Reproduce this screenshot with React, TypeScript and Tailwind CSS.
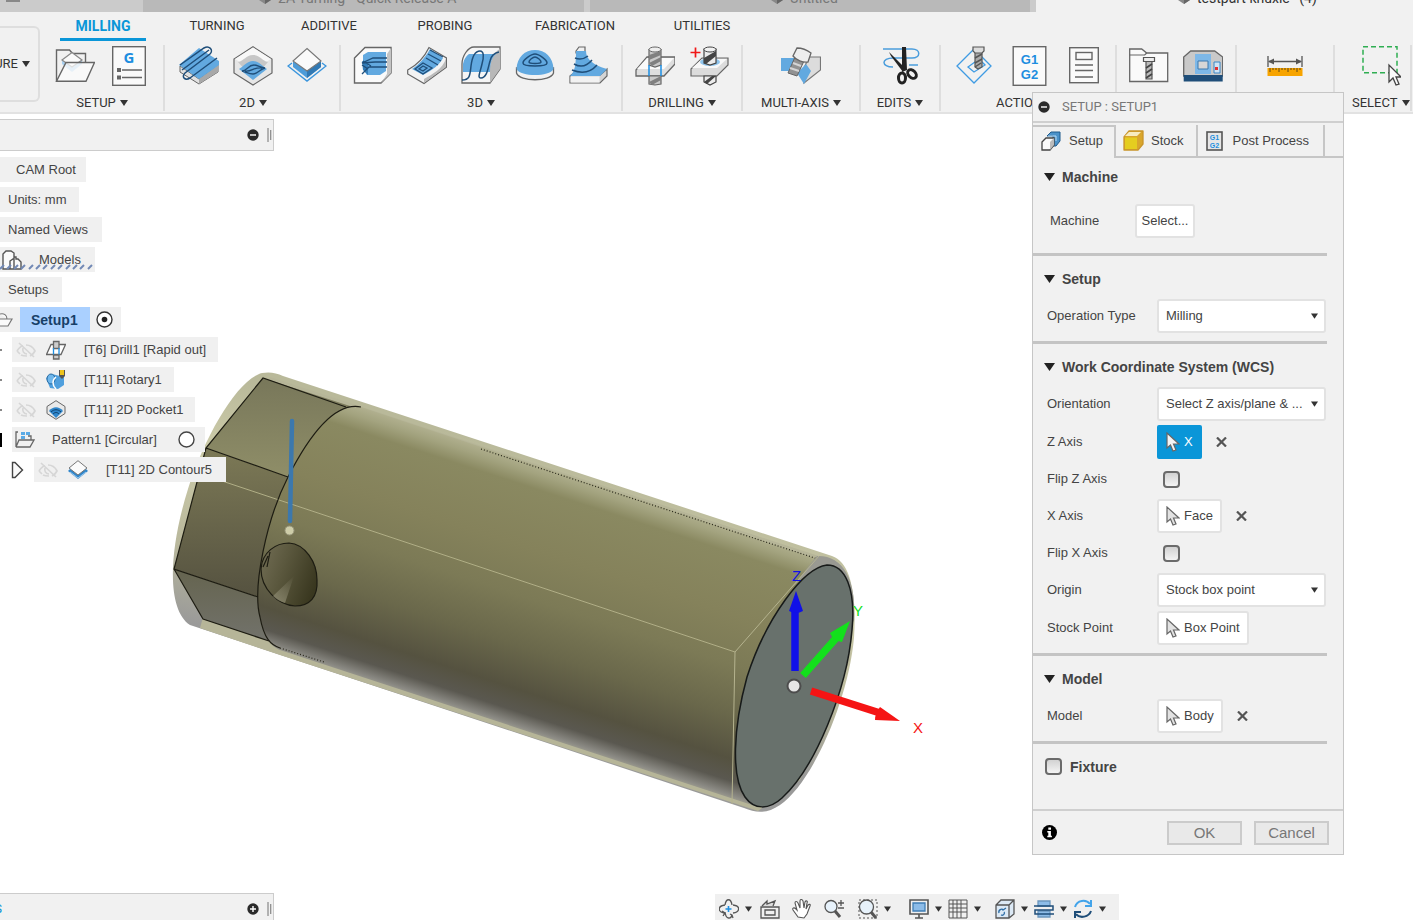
import React from "react";

const INK = "#666666";
const BLUE = "#62a9e0";
const NAVY = "#1f4e79";

function Icon({ children }: { children: React.ReactNode }) {
  return (
    <svg width="40" height="40" viewBox="0 0 40 40" fill="none" className="shrink-0" aria-hidden="true">
      {children}
    </svg>
  );
}

function Caret({ small = false }: { small?: boolean }) {
  return (
    <svg width={small ? 7 : 8} height="6" viewBox="0 0 8 6" className="shrink-0" aria-hidden="true">
      <path d="M0 0h8L4 6z" fill="#333" />
    </svg>
  );
}

const FolderSetup = () => (
  <Icon>
    <path d="M1.500 35V4h13l3 3.500h13v9" stroke={INK} strokeWidth="1.400" />
    <path d="M7 14l10 7 10-7v4l-10 8-10-8z" fill="#a9d0ef" />
    <path d="M17 6.500l10 7.500-10 7-10-7z" fill="#fafafa" stroke="#888" strokeWidth="1.200" />
    <path d="M11 16.500h28.500L31 35.300H1.500z" fill="#fbfbfb" fillOpacity="0.75" stroke={INK} strokeWidth="1.400" />
  </Icon>
);

const GSheet = () => (
  <Icon>
    <rect x="3.700" y="0.700" width="32.600" height="38.600" fill="#fafafa" stroke={INK} strokeWidth="1.400" />
    <text x="20" y="17" textAnchor="middle" fontSize="15" fontWeight="700" fontFamily="Noto Sans, sans-serif" fill="#1e8ee0">G</text>
    <path d="M8 22h4v4H8zM8 29.500h4v4H8z" fill={INK} />
    <path d="M13 24h20M13 31.500h20" stroke={INK} strokeWidth="1.400" />
  </Icon>
);

const Face2D = () => (
  <Icon>
    <path d="M1 20l19 13 19-14v7L20 38 1 26z" fill="#e2e2e2" stroke={INK} strokeWidth="1" />
    <path d="M20 33l19-14v7L20 38z" fill="#a8a8a8" />
    <path d="M0 19L20 2l20 13v4L20 33z" fill={BLUE} />
    <path d="M1 19L25 2c5-3 10 2 6 6L6 27c-4 4 0 8 5 5l27-20M3 24L30 4" stroke={NAVY} strokeWidth="1.500" />
  </Icon>
);

const Pocket2D = () => (
  <Icon>
    <path d="M20 0.700L39 13v14L20 39 1 27V13z" fill="#e6e6e6" stroke={INK} strokeWidth="1.200" />
    <path d="M20 1.500L38 13 20 24 2 13z" fill="#f8f8f8" />
    <path d="M5 16c6-1 8-7 15-7s9 6 15 7l-15 17z" fill="#c7c7c7" />
    <path d="M6 23c4-2 8-8 14-8s10 6 14 8L20 34z" fill={BLUE} />
    <path d="M9 25c5 0 6-6 12-6 3 0 6 2 11 3-5 1-7 6-12 6-4 0-7-2-11-3zM12 25c7 1 8-4 17-3" stroke={NAVY} strokeWidth="1.300" />
  </Icon>
);

const Contour2D = () => (
  <Icon>
    <path d="M5 17L1 20l19 15 19-15-4-3" stroke="#3a95dd" strokeWidth="1.400" />
    <path d="M6 15l14 10 14-10v6L20 32 6 21z" fill="#4d9cd9" />
    <path d="M20 25l14-10v6L20 32z" fill="#3179b4" />
    <path d="M20 2.500L34 15 20 25 6 15z" fill="#fafafa" stroke="#777" strokeWidth="1.100" />
  </Icon>
);

const Clearing3D = () => (
  <Icon>
    <path d="M1.500 37V12L12 1.500h26V27L28 37z" fill="#fafafa" stroke={INK} strokeWidth="1.400" />
    <path d="M28 37l10-10V2l-4 6v20z" fill="#c4c4c4" />
    <path d="M10 9l5-3h18v19l-6 4H14l-4-6z" fill={BLUE} />
    <path d="M9 15l6 3v11l-5-5z" fill="#347db8" />
    <path d="M34 12H20L9 17l13-1h12M34 21H16l-7 7M10 15l8 5M9 19l6 4" stroke={NAVY} strokeWidth="1.300" />
  </Icon>
);

const Parallel3D = () => (
  <Icon>
    <path d="M0.700 24C12 18 18 10 22 1.500L39.500 12v9L17 37.500 0.700 28z" fill="#f3f3f3" stroke={INK} strokeWidth="1.200" />
    <path d="M17 33c9-5 18-10 22-20v8L17 37z" fill="#bbb" />
    <path d="M5 23C13 18 19 10 23 3l13 9c-3 6-10 12-20 17z" fill={BLUE} />
    <path d="M8 23l8-6 9 5-9 6zM12 23l4-3 4 2-4 3zM19 12l12 7M21 8l13 7M23 4l13 7" stroke={NAVY} strokeWidth="1.300" />
  </Icon>
);

const Scallop3D = () => (
  <Icon>
    <path d="M1 18C1 10 7 1 13 1h26v22L29 37H1z" fill="#f5f5f5" stroke={INK} strokeWidth="1.300" />
    <path d="M29 37V20c1-8 5-15 10-17v20z" fill="#b8b8b8" />
    <path d="M2 26v-8C3 13 5 10 8 8h27c-4 3-6 8-6 18z" fill={BLUE} />
    <path d="M1 34c8 0 8-5 9-14 1-8 4-15 9-15 4 0 4 6 2 13-2 9-5 14-1 14 6 0 7-10 9-17 1-5 4-8 9-9" stroke={NAVY} strokeWidth="1.500" />
  </Icon>
);

const Dome3D = () => (
  <Icon>
    <path d="M1.500 22v5c3 9 34 9 37 0v-5z" fill="#f2f2f2" stroke={INK} strokeWidth="1.300" />
    <path d="M1.500 23C2 11 10 4 20 4s18 7 18.500 19c-4 8-33 8-37 0z" fill={BLUE} />
    <path d="M8 17c0-3 8-9 12-9s12 6 12 9c0 4-24 4-24 0zM14 16c0-2 4-5 6-5s6 3 6 5-12 2-12 0z" stroke={NAVY} strokeWidth="1.500" />
  </Icon>
);

const Tower3D = () => (
  <Icon>
    <path d="M1 30l8-6 22 5 7-6v7l-7 7H1z" fill="#d4d4d4" stroke={INK} strokeWidth="1.200" />
    <path d="M7 5l3-4h6v6H7z" fill="#f0f0f0" stroke={INK} strokeWidth="1.200" />
    <path d="M1 30C6 26 7 18 7 5h10c0 8 7 14 21 18l-7 7z" fill={BLUE} />
    <path d="M6 12c5 2 9 1 13-2M5 18c7 4 13 2 18-4M3 24c10 4 19 2 25-5" stroke={NAVY} strokeWidth="1.500" />
    <path d="M1.500 30.500h29v6h-29z" fill="#f2f2f2" />
  </Icon>
);

const Drill = () => (
  <Icon>
    <path d="M1 24L12 11h28v7L29 30H1z" fill="#dedede" stroke={INK} strokeWidth="1.300" />
    <path d="M2 23h27l10-11H12z" fill="#fafafa" />
    <path d="M14 3.500h12V19l-6 2-6-2zM14 30h12v8l-6 1-6-1z" fill="#c9c9c9" stroke={INK} strokeWidth="1.200" />
    <path d="M14 9l12-4v4l-12 5zM14 17l12-6v4l-9 5zM14 36l12-6v4l-9 5z" fill="#808080" />
    <ellipse cx="20" cy="3.500" rx="6" ry="2.500" fill="#eee" stroke={INK} />
    <path d="M14 19v11M26 19v11" stroke="#1d8fe3" strokeWidth="1.500" />
  </Icon>
);

const DrillPlus = () => (
  <Icon>
    <path d="M2 23l11-11h26v7L28 30H2z" fill="#dcdcdc" stroke={INK} strokeWidth="1.200" />
    <path d="M3 22h25l10-9H13z" fill="#f8f8f8" />
    <ellipse cx="21" cy="16" rx="10" ry="4" fill="#8fc4ec" />
    <path d="M15 3h12v14l-6 2-6-2zM15 30h12v6l-6 3-6-3z" fill="#ececec" stroke="#444" strokeWidth="1.200" />
    <path d="M15 12l12-7v5l-10 8-2-1zM15 36l8-6h4l-9 8z" fill="#444" />
    <ellipse cx="21" cy="3.500" rx="6" ry="2.500" fill="#f2f2f2" stroke="#444" />
    <path d="M6.500 1.500v10M1.500 6.500h10" stroke="#f01818" strokeWidth="1.700" />
  </Icon>
);

const MultiAxis = () => (
  <Icon>
    <path d="M0 12h18v13H0z" fill={BLUE} />
    <path d="M28 11h11.500v13L23 37V22z" fill="#dcdcdc" stroke="#777" strokeWidth="1.200" />
    <path d="M16 27l9-9 5 7-7 13z" fill={BLUE} />
    <path d="M14 11l9 4-7 15-9-3z" fill="#929292" stroke={INK} />
    <path d="M12 17l8 3M9 22l9 3" stroke="#d5d5d5" strokeWidth="2" />
    <path d="M16 2c6 0 10 2 14 5l-3 9c-5 1-12-2-15-6z" fill="#eee" stroke={INK} strokeWidth="1.300" />
  </Icon>
);

const Scissors = () => (
  <Icon>
    <path d="M3 3h29c9 0 9 9 0 9H13c-12 0-12 9 0 9M29 19h9" stroke="#4b9ddc" strokeWidth="1.500" />
    <path d="M22 1h4l1 23-5 2zM9 6l17 17-3 3L11 10z" fill="#222" />
    <ellipse cx="22" cy="32" rx="3.500" ry="5" stroke="#222" strokeWidth="3" />
    <ellipse cx="32" cy="28" rx="3.500" ry="5" stroke="#222" strokeWidth="3" transform="rotate(-45 32 28)" />
  </Icon>
);

const Simulate = () => (
  <Icon>
    <path d="M19 3L2 20l17 17 17-17zM24 13l6 6-11 7-6-5z" stroke="#3f9be3" strokeWidth="1.300" />
    <path d="M20 6h7v15l-4 2-3-2z" fill="#aaa" stroke="#555" strokeWidth="1.200" />
    <path d="M20 12l7-4M20 17l7-4M20 21l6-4" stroke="#555" strokeWidth="1.500" />
    <path d="M18 1h11v4l-2 2h-7l-2-2z" fill="#ddd" stroke="#555" strokeWidth="1.200" />
  </Icon>
);

const G1G2 = () => (
  <Icon>
    <rect x="4.200" y="0.700" width="32.600" height="38.600" fill="#fafafa" stroke={INK} strokeWidth="1.400" />
    <g fontSize="13" fontWeight="700" fontFamily="Liberation Sans, sans-serif" fill="#1e8ee0">
      <text x="20.500" y="18" textAnchor="middle">G1</text>
      <text x="20.500" y="33" textAnchor="middle">G2</text>
    </g>
  </Icon>
);

const Sheet = () => (
  <Icon>
    <rect x="6.700" y="1.700" width="28.600" height="35" fill="#fafafa" stroke={INK} strokeWidth="1.400" />
    <rect x="13" y="6.500" width="16" height="7" stroke={INK} strokeWidth="1.400" />
    <path d="M12 19h18M12 24.500h18M12 31h18" stroke={INK} strokeWidth="1.500" />
  </Icon>
);

const ToolLibrary = () => (
  <Icon>
    <path d="M0.700 35.500V3h12l5 4h21v28.500z" fill="#fafafa" stroke={INK} strokeWidth="1.300" />
    <path d="M0.700 9h15l2-2" stroke={INK} strokeWidth="1.200" />
    <path d="M17 15h6v18h-6z" fill="#bbb" stroke="#555" strokeWidth="1.200" />
    <path d="M17 22l6-4M17 27l6-4M17 32l6-4" stroke="#444" strokeWidth="1.700" />
    <path d="M14.500 11.500h11v4h-11z" fill="#eee" stroke="#555" strokeWidth="1.200" />
  </Icon>
);

const MachineLibrary = () => (
  <Icon>
    <path d="M0.700 30V11l7-6h24l8 6v19z" fill="#c9c9c9" stroke="#666" strokeWidth="1.300" />
    <path d="M0.700 29h39v6.500H.7z" fill={NAVY} />
    <path d="M12 8h16v20H12z" fill="#7db8e8" />
    <path d="M15 15h10v8H15z" fill="#d6d6d6" stroke="#3b79ae" />
    <path d="M31 16h6v11h-6z" fill="#cfe4f5" stroke="#3a86c5" />
    <path d="M32 21h3v3h-3z" fill="#e13030" />
  </Icon>
);

const Ruler = () => (
  <Icon>
    <path d="M3 10v11M37 10v11M4 15.500h32" stroke="#555" strokeWidth="1.300" />
    <path d="M3 15.500l6-3v6zM37 15.500l-6-3v6z" fill="#555" />
    <rect x="2.500" y="22" width="35" height="8" fill="#f7a400" />
    <path d="M5 22v4M8 22v2M11 22v2M14 22v4M17 22v2M20 22v2M23 22v4M26 22v2M29 22v2M32 22v4M35 22v2" stroke="#5e4614" />
  </Icon>
);

const SelectIcon = () => (
  <Icon>
    <rect x="2" y="0.800" width="34" height="26" stroke="#2fae52" strokeWidth="1.500" strokeDasharray="5 3" />
    <path d="M28 19v17l4-4 3 7 3-1-3-7h5z" fill="#fafafa" stroke="#444" strokeWidth="1.300" />
  </Icon>
);

function Group({ label, icons, className = "" }: { label: string; icons: React.ReactNode[]; className?: string }) {
  return (
    <div className={`flex h-[66px] shrink-0 flex-col items-center justify-between border-r-2 border-[#dedede] pt-px ${className}`}>
      <div className="flex gap-3.5">
        {icons.map((icon, i) => (
          <button key={i} type="button" aria-label={`${label || "Tool"} ${i + 1}`} className="block">
            {icon}
          </button>
        ))}
      </div>
      {label && (
        <button type="button" className="flex items-center gap-1 text-[13px] leading-4">
          {label}
          <Caret />
        </button>
      )}
    </div>
  );
}

function DocIcon() {
  return (
    <svg width="14" height="14" viewBox="0 0 14 14" aria-hidden="true">
      <path d="M7 0l6 3v7l-6 4-6-4V3z" fill="#888" />
      <path d="M7 7v7l6-4V3z" fill="#666" />
    </svg>
  );
}

function DocumentTabs() {
  const title = "-mt-2.5 flex gap-1.5 whitespace-nowrap";
  return (
    <div className="flex h-3 overflow-hidden bg-[#cbcbcb] text-sm leading-4 text-[#777]">
      <div className="w-[143px] shrink-0 pl-1.5">
        <div className="h-0.5 w-3.5 bg-[#888]" />
      </div>
      <div className="mr-1.5 flex min-w-0 flex-1 justify-center bg-[#b9b9b9]">
        <div className={`${title} pr-3`}><DocIcon />2A Turning - Quick Release A</div>
      </div>
      <div className="mr-1.5 flex min-w-0 flex-1 justify-center bg-[#b9b9b9]">
        <div className={`${title} pr-3`}><DocIcon />Untitled</div>
      </div>
      <div className="flex w-[377px] shrink-0 bg-[#f1f1f1] pl-[141px] text-[#333]">
        <div className={title}><DocIcon />testpart knuxie* (4)</div>
      </div>
    </div>
  );
}

function Toolbar() {
  const tab = "shrink-0 text-center";
  return (
    <header className="flex h-[102px] overflow-hidden border-b-2 border-[#e2e2e2] bg-[#f1f1f1] text-[13px] text-[#333]">
      <button type="button" className="mt-3.5 flex h-[76px] w-10 shrink-0 items-center justify-end gap-1 overflow-hidden rounded-r-md border-2 border-l-0 border-[#dedede] pr-2">
        <span>MANUFACTURE</span>
        <Caret />
      </button>
      <div className="flex min-w-0 flex-1 flex-col">
        <nav className="flex pt-1.5 pl-5 leading-4">
          <button type="button" className="h-[23px] w-[86px] shrink-0 border-b-[3px] border-[#0a96d8] pb-1 text-sm leading-4 font-bold text-[#0a96d8]">MILLING</button>
          <button type="button" className={`${tab} ml-2.5 h-4 w-[122px]`}>TURNING</button>
          <button type="button" className={`${tab} h-4 w-[102px]`}>ADDITIVE</button>
          <button type="button" className={`${tab} h-4 w-[130px]`}>PROBING</button>
          <button type="button" className={`${tab} h-4 w-[130px]`}>FABRICATION</button>
          <button type="button" className={`${tab} h-4 w-[124px]`}>UTILITIES</button>
        </nav>
        <div className="mt-1 flex">
          <Group label="SETUP" className="pr-3.5 pl-[15px]" icons={[<FolderSetup />, <GSheet />]} />
          <Group label="2D" className="pr-3 pl-3.5" icons={[<Face2D />, <Pocket2D />, <Contour2D />]} />
          <Group label="3D" className="pr-3 pl-3" icons={[<Clearing3D />, <Parallel3D />, <Scallop3D />, <Dome3D />, <Tower3D />]} />
          <Group label="DRILLING" className="px-3" icons={[<Drill />, <DrillPlus />]} />
          <Group label="MULTI-AXIS" className="w-[118px]" icons={[<MultiAxis />]} />
          <Group label="EDITS" className="w-20" icons={[<Scissors />]} />
          <Group label="ACTIONS" className="pr-3 pl-3.5" icons={[<Simulate />, <G1G2 />, <Sheet />]} />
          <Group label="" className="pr-3 pl-3" icons={[<ToolLibrary />, <MachineLibrary />]} />
          <Group label="" className="w-[98px]" icons={[<Ruler />]} />
          <Group label="SELECT" className="pl-[17px]" icons={[<SelectIcon />]} />
        </div>
      </div>
    </header>
  );
}

function HiddenEye() {
  return (
    <svg width="20" height="16" viewBox="0 0 20 16" fill="none" stroke="#d6d6d6" strokeWidth="1.700" aria-hidden="true">
      <path d="M3 1l15 14M1 9c2-3 4-5 6-5M4 12c-1-1-2-2-3-3M10 3c4 0 7 2 9 6-1 2-3 4-5 5M5 13c2 1 4 1 6 1M7 6c-1 3 1 6 4 6" />
    </svg>
  );
}

function MiniDrill() {
  return (
    <svg width="20" height="20" viewBox="0 0 40 40" fill="none" stroke="#666" strokeWidth="2.600" aria-hidden="true">
      <path d="M1 29L10 9h29l-9 20z" fill="#fff" />
      <path d="M15 3h11v14H15zM15 30h11v8H15z" fill="#ccc" />
      <path d="M15 16v13M26 16v13" stroke="#1d8fe3" />
    </svg>
  );
}

function MiniRotary() {
  return (
    <svg width="20" height="20" viewBox="0 0 20 20" fill="none" aria-hidden="true">
      <path d="M0 8l6-4 12 3v8l-6 4-8-1z" fill="#4f9fdd" />
      <ellipse cx="5" cy="9" rx="4" ry="5" fill="#6fb7ec" stroke="#27699f" />
      <path d="M10 7c-4 3-4 8 0 12" stroke="#fff" strokeWidth="1.500" />
      <path d="M13 0h6v6l-3 3-3-3z" fill="#555" />
      <path d="M14 0h4v5h-4z" fill="#eec31b" />
    </svg>
  );
}

function MiniPocket() {
  return (
    <svg width="20" height="20" viewBox="0 0 20 20" fill="none" aria-hidden="true">
      <path d="M10 .7L19 6.500v7L10 19.300l-9-5.800v-7z" fill="#e9e9e9" stroke="#666" />
      <path d="M3 11c4-5 10-5 14 0l-7 7z" fill="#2f86cb" />
      <path d="M5 12c3-3 7-3 10 0M7 14c2-2 4-2 6 0" stroke="#103f69" />
    </svg>
  );
}

function MiniContour() {
  return (
    <svg width="20" height="20" viewBox="0 0 20 20" fill="none" aria-hidden="true">
      <path d="M0 11l10 8 10-8-2-2v-2H2v2z" fill="#2f86cb" />
      <path d="M2 12l8 6 8-6" stroke="#bcdcf5" strokeWidth=".8" />
      <path d="M10 .7L19 8l-9 7-9-7z" fill="#fbfbfb" stroke="#777" />
    </svg>
  );
}

function MiniPattern() {
  return (
    <svg width="20" height="18" viewBox="0 0 20 18" fill="none" stroke="#666" strokeWidth="1.300" aria-hidden="true">
      <path d="M3 1H1v15L4 9h15l-4 7H1M16 9V5h-3" />
      <path d="M6 1h4v3H6zM11 1h4v3h-4zM6 5h4v3H6z" fill="#5aaae5" stroke="none" />
    </svg>
  );
}

function Stepper({ minus = true }: { minus?: boolean }) {
  return (
    <svg width="12" height="12" viewBox="0 0 12 12" className="shrink-0" aria-hidden="true">
      <circle cx="6" cy="6" r="5.700" fill="#2a2a2a" />
      <path d={minus ? "M3 6h6" : "M3 6h6M6 3v6"} stroke="#fff" strokeWidth="1.400" />
    </svg>
  );
}

function Grip() {
  return (
    <svg width="5" height="14" viewBox="0 0 5 14" aria-hidden="true">
      <path d="M1 0v14M3.700 2v10" stroke="#888" strokeWidth="1.200" />
    </svg>
  );
}

function Op({ icon, label }: { icon: React.ReactNode; label: string }) {
  return (
    <li className="flex items-center">
      <span className="w-3 shrink-0"><span className="block size-0.5 bg-[#888]" /></span>
      <div className="flex h-[25px] items-center bg-[#f0f0f0] pr-3 pl-1">
        <HiddenEye />
        <span className="mr-[18px] ml-2.5">{icon}</span>
        {label}
      </div>
    </li>
  );
}

function Browser() {
  const chip = "flex h-[25px] items-center bg-[#f0f0f0]";
  return (
    <aside className="relative w-[274px] pt-[5px] font-['Liberation_Sans',sans-serif] text-[13px] whitespace-nowrap text-[#444]">
      <div className="flex h-8 items-center justify-end gap-2 border border-l-0 border-[#ccc] bg-[#f1f1f1] pr-px">
        <button type="button" aria-label="Collapse browser"><Stepper /></button>
        <Grip />
      </div>
      <ul className="flex flex-col items-start gap-[5px] pt-1.5">
        <li className={`${chip} pr-2.5 pl-4`}>CAM Root</li>
        <li className={`${chip} pr-3 pl-2`}>Units: mm</li>
        <li className={`${chip} pr-3.5 pl-2`}>Named Views</li>
        <li className={`${chip} relative pr-3.5 pl-0.5`}>
          <svg width="20" height="20" viewBox="0 0 20 20" fill="#fafafa" stroke="#555" strokeWidth="1.400" className="mr-[17px]" aria-hidden="true">
            <path d="M1 19V4l3-3h5l3 2v16zM8 19V11l3-2h1V7h2v2h2l3 3v7z" />
          </svg>
          Models
          <svg width="93" height="6" viewBox="0 0 93 6" className="absolute bottom-0.5 left-0" aria-hidden="true">
            <path d="M0 5l4-4M7 5l4-4M14 5l4-4M21 5l4-4M29 5l4-4M36 5l4-4M43 5l4-4M51 5l4-4M58 5l4-4M66 5l4-4M73 5l4-4M80 5l4-4M88 5l4-4" stroke="#7289b5" strokeWidth="2" />
          </svg>
        </li>
        <li className={`${chip} pr-3.5 pl-2`}>Setups</li>
        <li className={`${chip} pr-2`}>
          <svg width="13" height="16" viewBox="0 0 13 16" fill="#fafafa" stroke="#777" strokeWidth="1.200" className="mr-[7px]" aria-hidden="true">
            <path d="M0 2c4-1 7 1 7 5M0 7h12l-4 7H0" />
          </svg>
          <span className="mr-1.5 flex h-full items-center bg-[#aad0ff] pr-3 pl-[11px] text-sm font-bold text-[#173f68]">Setup1</span>
          <svg width="17" height="17" viewBox="0 0 17 17" aria-hidden="true">
            <circle cx="8.500" cy="8.500" r="7.500" fill="#fff" stroke="#333" strokeWidth="1.400" />
            <circle cx="8.500" cy="8.500" r="2.800" fill="#222" />
          </svg>
        </li>
        <Op icon={<MiniDrill />} label="[T6] Drill1 [Rapid out]" />
        <Op icon={<MiniRotary />} label="[T11] Rotary1" />
        <Op icon={<MiniPocket />} label="[T11] 2D Pocket1" />
        <li className="flex items-center">
          <span className="w-3"><span className="block h-3.5 w-0.5 bg-black" /></span>
          <div className={`${chip} pr-2.5 pl-[3px]`}>
            <MiniPattern />
            <span className="mr-[21px] ml-[17px]">Pattern1 [Circular]</span>
            <svg width="17" height="17" viewBox="0 0 17 17" aria-hidden="true">
              <circle cx="8.500" cy="8.500" r="7.500" fill="#fff" stroke="#444" strokeWidth="1.400" />
            </svg>
          </div>
        </li>
        <li className="flex items-center pl-[11px]">
          <svg width="13" height="18" viewBox="0 0 13 18" className="mr-2.5" aria-hidden="true">
            <path d="M1.500 1.500v15H4L11.500 9 4 1.500z" fill="#fafafa" stroke="#444" strokeWidth="1.400" />
          </svg>
          <div className={`${chip} pr-3.5 pl-1`}>
            <HiddenEye />
            <span className="mr-[18px] ml-2.5"><MiniContour /></span>
            [T11] 2D Contour5
          </div>
        </li>
      </ul>
    </aside>
  );
}

function Scene() {
  return (
    <svg
      width="800"
      height="470"
      viewBox="150 354 800 470"
      fill="none"
      className="absolute top-[240px] left-[150px]"
      role="img"
      aria-label="Cylindrical part with stock and work coordinate axes"
    >
      <defs>
        <linearGradient id="shaft" gradientUnits="userSpaceOnUse" x1="560" y1="469" x2="478" y2="721">
          <stop offset="0" stopColor="#b4b393" />
          <stop offset=".045" stopColor="#a3a37f" />
          <stop offset=".1" stopColor="#8a8961" />
          <stop offset=".32" stopColor="#85825b" />
          <stop offset=".5" stopColor="#7c7a56" />
          <stop offset=".68" stopColor="#6a684b" />
          <stop offset=".84" stopColor="#555240" />
          <stop offset=".92" stopColor="#5a5850" />
          <stop offset=".97" stopColor="#8b8a84" />
          <stop offset="1" stopColor="#b0af99" />
        </linearGradient>
        <linearGradient id="stock" gradientUnits="userSpaceOnUse" x1="240" y1="380" x2="180" y2="620">
          <stop offset="0" stopColor="#b9b99a" />
          <stop offset=".3" stopColor="#cccba9" />
          <stop offset=".7" stopColor="#b9b89c" />
          <stop offset="1" stopColor="#9a9a99" />
        </linearGradient>
        <linearGradient id="hexTop" x1="0" y1="0" x2="0" y2="1">
          <stop offset="0" stopColor="#78775a" />
          <stop offset="1" stopColor="#8f8e68" />
        </linearGradient>
        <linearGradient id="hexMid" x1="0" y1="0" x2="0" y2="1">
          <stop offset="0" stopColor="#7c7956" />
          <stop offset="1" stopColor="#555240" />
        </linearGradient>
        <linearGradient id="hexLow" x1="0" y1="0" x2="0" y2="1">
          <stop offset="0" stopColor="#65644f" />
          <stop offset="1" stopColor="#72726b" />
        </linearGradient>
        <linearGradient id="bore" x1="0" y1="0.200" x2="1" y2="0.600">
          <stop offset="0" stopColor="#6f6b52" />
          <stop offset=".4" stopColor="#5b583e" />
          <stop offset="1" stopColor="#39371f" />
        </linearGradient>
        <linearGradient id="glint" gradientUnits="userSpaceOnUse" x1="294" y1="576" x2="277" y2="600">
          <stop offset="0" stopColor="#8c8970" stopOpacity="0" />
          <stop offset="1" stopColor="#8c8970" stopOpacity="0.8" />
        </linearGradient>
      </defs>
      <path
        d="M262 373Q273 371 283 376L832 556C850 562 857 592 854 638C848 702 812 783 780 805C767 814 756 813 744 808L190 625C167 610 168 553 188 489C205 435 238 379 262 373Z"
        fill="url(#stock)"
      />
      <path d="M270 377L834 561L853 600L850 660L800 780L758 811L280 655L200 628Z" fill="#b6b598" />
      <path d="M263 378L350 406L330 460L288 477L206 448Z" fill="url(#hexTop)" />
      <path d="M206 448L288 477L300 540L258 597L174 569Z" fill="url(#hexMid)" />
      <path d="M174 569L258 597L280 630L269 641L203 619Z" fill="url(#hexLow)" />
      <path
        d="M361 407L830 563L853 620L800 775L755 806L280 650C271 646 264 639 260 617C252 587 267 518 288 477C312 430 337 402 361 407Z"
        fill="url(#shaft)"
      />
      <path d="M213 478L735 652" stroke="#b0ae86" strokeWidth="1" />
      <g stroke="#1d1c12" strokeWidth="1.200">
        <path d="M346 407L263 378L206 448L288 477M206 448L174 569L258 597M174 569L203 619L269 641" />
        <path d="M361 407C337 402 312 430 288 477C267 518 252 587 260 617C264 639 271 645 280 648" />
        <path d="M289 543C276 543 262 552 261 569C261 589 278 605 295 606C310 606 318 597 317 580C317 562 305 544 289 543Z" fill="url(#bore)" />
        <path d="M270 552l-3 15M268 556l-5 11" />
      </g>
      <path d="M294 576L273 596Q278 601 285 603Z" fill="url(#glint)" />
      <path d="M481 449L827 562M280 648L324 662" stroke="#28271a" strokeWidth="1.200" strokeDasharray="1 2" />
      <path d="M292 421L290 521" stroke="#3c78ad" strokeWidth="4.500" strokeLinecap="round" />
      <circle cx="289.500" cy="530.500" r="4.500" fill="#cecda9" stroke="#99977c" />
      <path d="M817 556C842 555 857 578 854 622L828 566C818 566 800 578 788 592Z" fill="#999992" />
      <path d="M827 565C845 565 856 588 852 630C847 690 815 768 782 798C769 810 754 810 745 797C731 777 733 728 747 677C766 618 803 568 827 565Z" fill="#68716c" stroke="#171a19" strokeWidth="1.500" />
      <path d="M819 556L735 652L732 804" stroke="#b5b38f" strokeWidth="1" />
      <g strokeWidth="7.500">
        <path d="M795 671V606" stroke="#1010e8" />
        <path d="M803 675.500L838 636" stroke="#13e01c" />
        <path d="M811 691L880 713" stroke="#f51414" />
      </g>
      <path d="M796 591l7 20q-7 4-14 0z" fill="#1010e8" />
      <path d="M850 621l-20 12q3 8 12 9z" fill="#13e01c" />
      <path d="M900 721l-20-14q-5 6-5 13z" fill="#f51414" />
      <circle cx="794" cy="686" r="6.500" fill="#e6e6e6" stroke="#4d4d4d" strokeWidth="2" />
      <g fontFamily="Liberation Sans, sans-serif" fontSize="15" textAnchor="middle">
        <text x="796.500" y="581" fill="#1010e8">Z</text>
        <text x="858" y="616" fill="#13e01c">Y</text>
        <text x="918" y="733" fill="#f51414">X</text>
      </g>
    </svg>
  );
}

function PointerIcon({ light = false }: { light?: boolean }) {
  return (
    <svg width="14" height="20" viewBox="0 0 14 20" className="shrink-0" aria-hidden="true">
      <path d="M1 1v15l3.500-3 2.500 6 3-1-2.500-6H13z" fill={light ? "#f4f4f4" : "#e2e2e2"} stroke="#666" strokeWidth="1.200" />
    </svg>
  );
}

function Clear({ label }: { label: string }) {
  return (
    <button type="button" aria-label={label} className="ml-3.5">
      <svg width="11" height="10" viewBox="0 0 11 10" aria-hidden="true">
        <path d="M1 0.500l9 9M10 0.500l-9 9" stroke="#555" strokeWidth="2.200" />
      </svg>
    </button>
  );
}

function Pick({ label, id }: { label: string; id: string }) {
  return (
    <button type="button" id={id} className="flex h-[34px] items-center gap-1 rounded-[3px] border-2 border-[#e2e2e2] bg-white px-[7px]">
      <PointerIcon />
      {label}
    </button>
  );
}

function Drop({ id, value }: { id: string; value: string }) {
  return (
    <div className="relative flex-1">
      <select id={id} defaultValue={value} className="block h-[34px] w-full appearance-none rounded-[3px] border-2 border-[#e2e2e2] bg-white pr-3 pl-[7px] text-[13px]">
        <option>{value}</option>
      </select>
      <span className="pointer-events-none absolute top-3.5 right-2"><Caret small /></span>
    </div>
  );
}

const box = "size-[17px] shrink-0 appearance-none rounded-[4px] border-2 border-[#6b6b6b] bg-linear-to-b from-[#d2d2d2] to-[#f4f4f4] checked:bg-[#0a96d8]";

function Row({ label, id, check = false, children }: { label: string; id: string; check?: boolean; children: React.ReactNode }) {
  return (
    <div className={`flex items-center pr-[17px] pl-3.5 ${check ? "h-9" : "h-[38px]"}`}>
      <label htmlFor={id} className="w-[110px] shrink-0">{label}</label>
      {children}
    </div>
  );
}

function SectionTitle({ children }: { children: React.ReactNode }) {
  return (
    <h2 className="mt-1 h-[37px]">
      <button type="button" className="flex h-full items-center gap-[7px] pl-[11px] text-sm font-bold">
        <svg width="11" height="8" viewBox="0 0 11 8" aria-hidden="true"><path d="M0 0h11L5.500 8z" fill="#222" /></svg>
        {children}
      </button>
    </h2>
  );
}

const section = "border-b-[3px] border-[#c4c4c4] pb-1.5";

function SetupPanel() {
  return (
    <section className="absolute top-[92px] right-[69px] w-[312px] border border-[#c6c6c6] bg-[#f1f1f1] font-['Liberation_Sans',sans-serif] text-[13px] whitespace-nowrap text-[#444]">
      <div className="flex h-[30px] items-center border-b-2 border-[#cfcfcf] pl-[5px] font-['Roboto',sans-serif] text-[#777]">
        <button type="button" aria-label="Collapse dialog" className="mr-3"><Stepper /></button>
        SETUP : SETUP1
      </div>
      <div className="flex h-[35px] pt-0.5">
        <button type="button" className="flex w-[83px] items-center gap-2 border-t-2 border-r-2 border-[#c6c6c6] pb-1 pl-2">
          <svg width="20" height="20" viewBox="0 0 20 20" aria-hidden="true">
            <path d="M6 5l4-4h9v9l-4 5h-3V5z" fill="#4b92c9" stroke="#1f5a8c" />
            <path d="M7 5h8v5" fill="none" stroke="#b7dcf7" />
            <path d="M1 11l4-4h8v7l-4 5H1z" fill="#fafafa" stroke="#444" strokeWidth="1.300" />
            <path d="M9 19v-8l4-4v7z" fill="#bbb" />
          </svg>
          Setup
        </button>
        <div className="flex flex-1 border-b-2 border-[#c6c6c6]">
          <button type="button" className="flex items-center gap-[7px] border-r-2 border-[#c6c6c6] pr-3 pl-[7px]">
            <svg width="21" height="21" viewBox="0 0 21 21" strokeLinejoin="round" aria-hidden="true">
              <path d="M1 7l5-6h14v13l-5 6H1z" fill="#d9a62c" stroke="#c9952a" strokeWidth="1.300" />
              <path d="M2 6l4-4h12l-4 4z" fill="#f7ebbf" />
              <path d="M2 7.500h12V19H2z" fill="#e5cd1f" />
            </svg>
            Stock
          </button>
          <button type="button" className="flex items-center gap-2.5 border-r-2 border-[#c6c6c6] pr-3.5 pl-2">
            <svg width="17" height="20" viewBox="0 0 17 20" aria-hidden="true">
              <rect x="1" y="1" width="15" height="18" fill="#e6e6e6" stroke="#555" strokeWidth="1.600" />
              <g fontSize="7" fontWeight="700" fontFamily="Liberation Sans, sans-serif" fill="#1e8ee0" textAnchor="middle">
                <text x="8.500" y="8.500">G1</text>
                <text x="8.500" y="16.500">G2</text>
              </g>
            </svg>
            Post Process
          </button>
        </div>
      </div>

      <div className="mr-4">
        <div className={`${section} -mt-1`}>
          <SectionTitle>Machine</SectionTitle>
          <div className="mt-0.5 mb-0.5 flex h-12 items-center pl-[17px]">
            <label htmlFor="machine" className="w-[85px]">Machine</label>
            <button type="button" id="machine" className="h-[34px] w-[60px] rounded-[3px] border-2 border-[#e2e2e2] bg-white">Select...</button>
          </div>
        </div>
        <div className={section}>
          <SectionTitle>Setup</SectionTitle>
          <div className="-mr-4"><Row label="Operation Type" id="operation"><Drop id="operation" value="Milling" /></Row></div>
        </div>
        <div className={section}>
          <SectionTitle>Work Coordinate System (WCS)</SectionTitle>
          <div className="-mr-4">
            <Row label="Orientation" id="orientation"><Drop id="orientation" value="Select Z axis/plane &amp; ..." /></Row>
            <Row label="Z Axis" id="z-axis">
              <button type="button" id="z-axis" className="flex h-[34px] items-center gap-1 rounded-[2px] bg-[#0a96d8] px-[9px] text-white">
                <PointerIcon light />X
              </button>
              <Clear label="Clear Z axis" />
            </Row>
            <Row label="Flip Z Axis" id="flip-z" check><input type="checkbox" id="flip-z" className={`${box} ml-1.5`} /></Row>
            <Row label="X Axis" id="x-axis"><Pick id="x-axis" label="Face" /><Clear label="Clear X axis" /></Row>
            <Row label="Flip X Axis" id="flip-x" check><input type="checkbox" id="flip-x" className={`${box} ml-1.5`} /></Row>
            <Row label="Origin" id="origin"><Drop id="origin" value="Stock box point" /></Row>
            <Row label="Stock Point" id="stock-point"><Pick id="stock-point" label="Box Point" /></Row>
          </div>
        </div>
        <div className={section}>
          <SectionTitle>Model</SectionTitle>
          <Row label="Model" id="model"><Pick id="model" label="Body" /><Clear label="Clear model" /></Row>
        </div>
        <label className="mt-1 mb-6 flex h-[37px] items-center gap-2 pl-3 text-sm font-bold">
          <input type="checkbox" className={box} />
          Fixture
        </label>
      </div>

      <div className="flex h-[45px] items-center border-t-2 border-[#cfcfcf] pr-3.5 pl-[9px]">
        <button type="button" aria-label="Information">
          <svg width="15" height="15" viewBox="0 0 15 15" aria-hidden="true">
            <circle cx="7.500" cy="7.500" r="7.500" fill="#000" />
            <path d="M6.300 2.500h2.700v2.200H6.300zM5.300 6h3.600v4.800h1v1.500H5.300v-1.500h1V7.500h-1z" fill="#fff" />
          </svg>
        </button>
        <button type="button" className="mr-3 ml-auto h-6 w-[75px] border-2 border-[#cbcbcb] bg-[#e9e9e9] text-[15px] leading-5 text-[#777]">OK</button>
        <button type="button" className="h-6 w-[75px] border-2 border-[#cbcbcb] bg-[#e9e9e9] text-[15px] leading-5 text-[#777]">Cancel</button>
      </div>
    </section>
  );
}

function Nav({ name, caret = false, className = "", children }: { name: string; caret?: boolean; className?: string; children: React.ReactNode }) {
  return (
    <button type="button" aria-label={name} className={`flex items-center gap-1.5 ${className}`}>
      <svg width="20" height="20" viewBox="0 0 20 20" fill="none" stroke="#555" strokeWidth="1.300" aria-hidden="true">
        {children}
      </svg>
      {caret && <Caret small />}
    </button>
  );
}

function NavigationBar() {
  return (
    <div className="absolute bottom-0 left-[715px] flex h-[26px] w-[404px] items-center bg-[#f0f0f0] pt-1 pl-1">
      <Nav name="Orbit" caret>
        <path d="M6 6c1-7 6-7 7 0M14 6c8 1 7 7 0 8M6 6c-8 1-7 7-1 8M6 13c1 8 6 7 7 3M3 12l3 2-2 3M11 15l2 1 1 3" />
        <path d="M9.500 7v6M6.500 10h6" stroke="#1e8ee0" strokeWidth="1.600" />
      </Nav>
      <Nav name="Look at" className="ml-2">
        <path d="M1 8h18v11H1zM5 11h10v5H5z" />
        <path d="M2 7l5-5v3l8-3-2 5" fill="#ddd" />
      </Nav>
      <Nav name="Pan" className="ml-3">
        <path d="M6 18L1 11c-1-2 1-3 3-1l1 1-2-7c0-2 2-2 3 0l2 5V2c0-2 2-2 3 0l1 7 1-6c1-2 3-1 2 1l-1 6 2-4c1-1 3-1 2 1l-3 8-3 4z" fill="#fff" strokeWidth="1.100" />
      </Nav>
      <Nav name="Zoom" className="ml-3">
        <circle cx="7" cy="7.500" r="6" fill="#e7f2fb" />
        <path d="M11 12l5 6" strokeWidth="3" />
        <path d="M17 1v6M14 4h6M14 9h6" />
      </Nav>
      <Nav name="Zoom window" caret className="ml-3.5">
        <path d="M1 1h18v18H1z" strokeDasharray="2 2" strokeWidth="1" />
        <circle cx="8.500" cy="8" r="7" fill="#e7f2fb" />
        <path d="M13 13l5 6" strokeWidth="3" />
      </Nav>
      <Nav name="Display settings" caret className="ml-[18px]">
        <path d="M1 1h18v14H1zM6 19h8M10 15v4" strokeWidth="1.600" />
        <path d="M4 4h12v8H4z" fill="#8dbce8" stroke="#3f7eb5" />
      </Nav>
      <Nav name="Grid and snaps" caret className="ml-1.5">
        <path d="M1 1h18v18H1zM5 1v18M9 1v18M13 1v18M1 5h18M1 9h18M1 13h18" strokeWidth="1" />
      </Nav>
      <Nav name="Viewports" caret className="ml-3.5">
        <path d="M1 6l5-5h13v14l-5 4H1zM1 6h13v13M14 6l5-5" fill="#dce9f5" />
        <path d="M4 14c-1-3 3-5 4-3l3-2M6 16c3 1 4-2 3-3" stroke="#2c6ca5" />
      </Nav>
      <Nav name="Sections" caret className="ml-1.5">
        <path d="M4 2h12v5H4zM4 12h12v6H4z" fill="#8dbce8" stroke="#6c96bd" />
        <path d="M0 7h19v4H1v4h19" stroke={NAVY} strokeWidth="1.500" />
      </Nav>
      <Nav name="Refresh" caret className="ml-1.5">
        <path d="M2 8c2-7 11-8 15-3M18 1v6h-6" stroke="#43a4ea" strokeWidth="2" />
        <path d="M18 12c-2 6-11 8-15 3M2 19v-6h6" stroke={NAVY} strokeWidth="2" />
      </Nav>
    </div>
  );
}

export default function App() {
  return (
    <div className="relative flex min-h-screen flex-col overflow-hidden bg-white font-['Roboto','Liberation_Sans',sans-serif]">
      <DocumentTabs />
      <Toolbar />
      <main className="relative flex flex-1 flex-col">
        <Scene />
        <Browser />
        <div className="mt-auto flex h-[27px] w-[274px] items-center gap-2 overflow-hidden border-t border-r border-[#ccc] bg-[#f1f1f1] pt-1 pr-px">
          <div className="mr-auto flex w-0.5 justify-end overflow-hidden text-[13px] text-[#0a96d8]">COMMENTS</div>
          <button type="button" aria-label="Expand comments"><Stepper minus={false} /></button>
          <Grip />
        </div>
        <NavigationBar />
      </main>
      <SetupPanel />
    </div>
  );
}
